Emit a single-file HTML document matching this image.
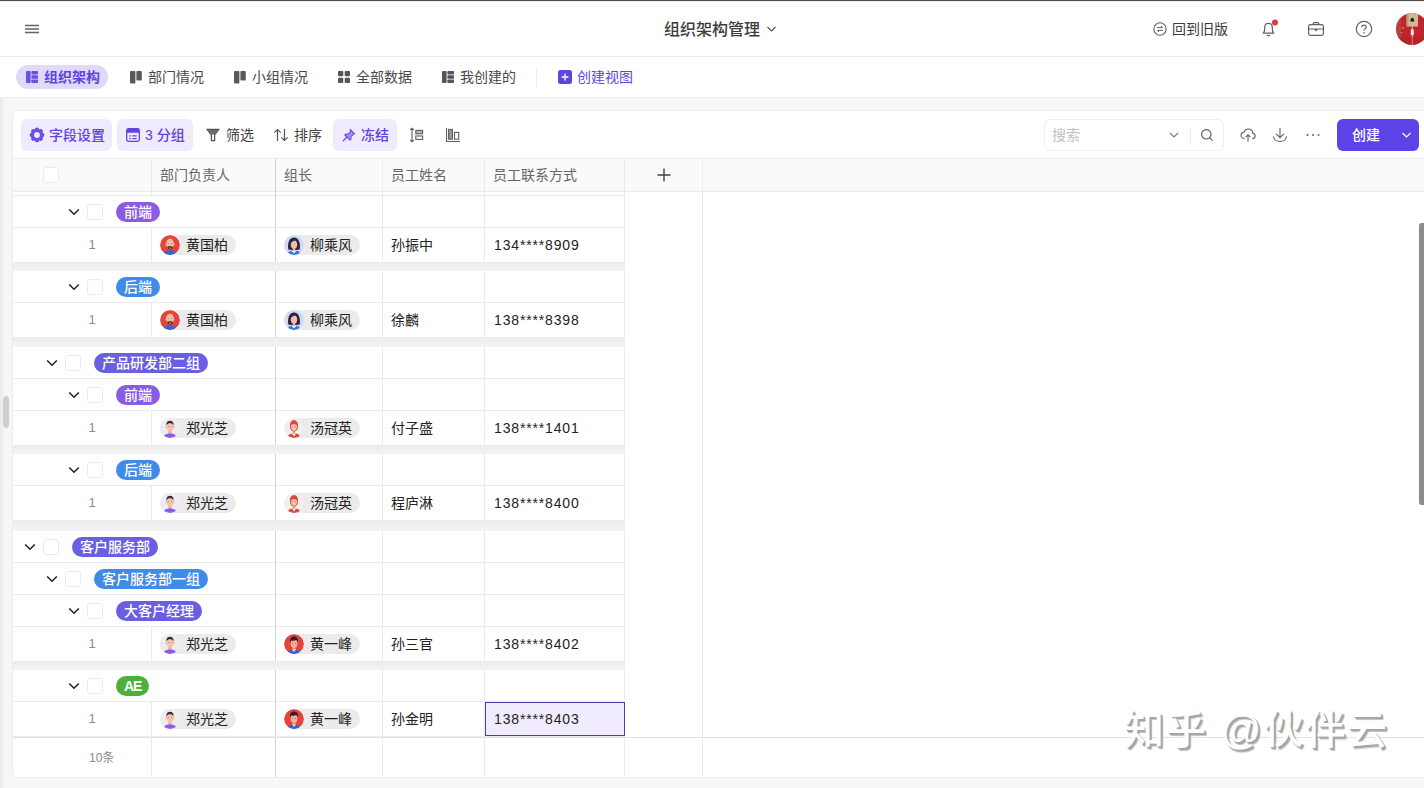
<!DOCTYPE html>
<html lang="zh-CN"><head><meta charset="utf-8"><title>组织架构管理</title>
<style>
*{box-sizing:border-box;margin:0;padding:0}
html,body{width:1424px;height:788px;overflow:hidden}
body{position:relative;background:#f6f7f9;font-family:"Liberation Sans","Noto Sans CJK SC",sans-serif;font-size:14px;color:#333;line-height:20px}
.abs{position:absolute}
.t{position:absolute;white-space:nowrap;line-height:20px;height:20px}
svg{position:absolute;overflow:visible}
#topline{left:0;top:0;width:1424px;height:1px;background:#505050;box-shadow:0 1px 0 rgba(0,0,0,.06)}
#header{left:0;top:0;width:1424px;height:57px;background:#fff;border-bottom:1px solid #ececec}
#tabs{left:0;top:57px;width:1424px;height:41px;background:#fff;border-bottom:1px solid #eeeff1}
#leftshade{left:0;top:98px;width:12px;height:690px;background:linear-gradient(90deg,#e7e8ea 0,#f1f2f4 3px,#f5f6f8 7px)}
#card{left:12px;top:110px;width:1420px;height:668px;background:#fff;border:1px solid #ececec;border-radius:6px}
.pill{position:absolute;border-radius:12px;background:#e0d9fa}
.btn{position:absolute;border-radius:6px;background:#efebfd;height:32px;top:119px}
.pu{color:#5f45de}
.hl{position:absolute;height:1px;background:#ebebeb}
.vl{position:absolute;width:1px;background:#ebebeb}
.gap{position:absolute;left:13px;width:612px;background:linear-gradient(180deg,#ededed,#f3f3f3)}
.cb{position:absolute;width:16px;height:16px;border:1px solid #ebebeb;border-radius:3px;background:#fff}
.tag{position:absolute;height:20px;border-radius:10px;color:#fff;font-weight:500;padding:0 8px;line-height:20px;white-space:nowrap}
.chip{position:absolute;height:20px;border-radius:10px;background:#ebebeb;line-height:20px;padding-left:26px;color:#222;white-space:nowrap}
.num{position:absolute;font-size:13px;color:#8c8c8c;width:20px;text-align:center;left:82px;line-height:20px}
.cell{position:absolute;color:#222;white-space:nowrap;line-height:20px}
</style></head>
<body>
<div id="header" class="abs"></div><div id="topline" class="abs"></div>
<svg style="left:24px;top:24px" width="16" height="10" viewBox="0 0 16 10"><path d="M1 1.5h14M1 5h14M1 8.5h14" stroke="#666" stroke-width="1.3" fill="none"/></svg>
<div class="t" style="left:664px;top:19px;font-size:16px;font-weight:500;color:#3c3c3c;line-height:22px;height:22px">组织架构管理</div>
<svg style="left:766px;top:25px" width="11" height="8" viewBox="0 0 11 8"><path d="M1.5 2l4 4 4-4" stroke="#555" stroke-width="1.2" fill="none"/></svg>
<svg style="left:1152px;top:21px" width="16" height="16" viewBox="0 0 16 16"><circle cx="8" cy="8" r="6.200" stroke="#636363" stroke-width="1.1" fill="none"/><path d="M5 6.6h5.5M9 5l1.6 1.6M11 9.4H5.5M7 11L5.4 9.4" stroke="#636363" stroke-width="1" fill="none"/></svg>
<div class="t" style="left:1172px;top:19px;color:#3c3c3c">回到旧版</div>
<svg style="left:1259px;top:19px" width="20" height="20" viewBox="0 0 20 20"><path d="M4.2 14.2h10.6c-1-1-1.5-2.2-1.5-4.2V8.3c0-2.2-1.6-3.9-3.8-3.9S5.700 6.1 5.700 8.300V10c0 2-.5 3.200-1.500 4.200z" stroke="#636363" stroke-width="1.2" fill="none" stroke-linejoin="round"/><path d="M7.900 15.800c.3.700.900 1.100 1.600 1.100s1.300-.4 1.600-1.100" stroke="#636363" stroke-width="1.200" fill="none"/><circle cx="16" cy="3.500" r="3" fill="#e8353e"/></svg>
<svg style="left:1307px;top:20px" width="18" height="18" viewBox="0 0 18 18"><rect x="1.600" y="4.600" width="14.800" height="10.800" rx="1.800" stroke="#636363" stroke-width="1.200" fill="none"/><path d="M6.200 4.600V3.600c0-.6.400-1 1-1h3.600c.6 0 1 .4 1 1v1M1.600 9h14.800M7.600 9.200l1.400 1.400 1.400-1.400" stroke="#636363" stroke-width="1.200" fill="none"/></svg>
<svg style="left:1355px;top:20px" width="18" height="18" viewBox="0 0 18 18"><circle cx="9" cy="9" r="7.700" stroke="#636363" stroke-width="1.200" fill="none"/><path d="M6.800 7.300c0-1.300 1-2.100 2.200-2.100s2.200.8 2.200 2c0 1.700-2.200 1.700-2.200 3.500" stroke="#636363" stroke-width="1.200" fill="none"/><circle cx="9" cy="12.800" r=".8" fill="#636363"/></svg>
<svg style="left:1396px;top:13px" width="32" height="32" viewBox="0 0 32 32"><defs><clipPath id="uc"><circle cx="16" cy="16" r="16"/></clipPath><filter id="ub" x="-10%" y="-10%" width="120%" height="120%"><feGaussianBlur stdDeviation=".45"/></filter></defs><g clip-path="url(#uc)"><rect width="32" height="32" fill="#c2242d"/><g filter="url(#ub)"><rect x="-1" y="-1" width="6" height="34" fill="#a35a55" opacity=".55"/><rect x="10.500" y="-1" width="11.500" height="14.500" fill="#cfb992"/><rect x="10.500" y="-1" width="2" height="14.500" fill="#b98f6e" opacity=".7"/><path d="M16.300 4.800c-1.300 0-1.900 1.900-1.900 3.800h3.800c0-1.900-.6-3.800-1.900-3.800z" fill="#1d1a18"/><rect x="15.700" y="13" width="1.300" height="20" fill="#e3a99b"/><rect x="14.800" y="16.500" width="3" height="5.500" fill="#f3e4e6"/><rect x="6" y="14" width="1.500" height="1.500" fill="#e9b4b0" opacity=".8"/><rect x="5" y="19" width="1.200" height="1.200" fill="#e9b4b0" opacity=".7"/><rect x="26.500" y="-1" width="6" height="34" fill="#9c3038" opacity=".7"/><rect x="0" y="24" width="32" height="9" fill="#a81e28" opacity=".45"/></g></g></svg>
<div id="tabs" class="abs"></div>
<div class="pill" style="left:16px;top:65px;width:92px;height:24px"></div>
<svg style="left:26px;top:71px" width="12" height="12" viewBox="0 0 12 12"><rect x="0" y="0" width="4.600" height="12" rx="1" fill="#6a50e6"/><rect x="5.400" y="0" width="6.600" height="3.500" rx=".8" fill="#6a50e6"/><rect x="5.400" y="4.250" width="6.600" height="3.500" rx=".6" fill="#6a50e6"/><rect x="5.400" y="8.500" width="6.600" height="3.500" rx=".8" fill="#6a50e6"/></svg>
<div class="t pu" style="left:44px;top:67px;font-weight:700">组织架构</div>
<svg style="left:130px;top:71px" width="12" height="12" viewBox="0 0 12 12"><rect x="0" y="0" width="5.400" height="12.400" rx="1" fill="#5a5a5a"/><rect x="6.400" y="0" width="5.400" height="9.400" rx="1" fill="#5a5a5a"/></svg>
<div class="t" style="left:148px;top:67px;color:#494949">部门情况</div>
<svg style="left:234px;top:71px" width="12" height="12" viewBox="0 0 12 12"><rect x="0" y="0" width="5.400" height="12.400" rx="1" fill="#5a5a5a"/><rect x="6.400" y="0" width="5.400" height="9.400" rx="1" fill="#5a5a5a"/></svg>
<div class="t" style="left:252px;top:67px;color:#494949">小组情况</div>
<svg style="left:338px;top:71px" width="12" height="12" viewBox="0 0 12 12"><rect x="0" y="0" width="5.300" height="5.300" rx="1" fill="#555"/><rect x="6.700" y="0" width="5.300" height="5.300" rx="1" fill="#555"/><rect x="0" y="6.700" width="5.300" height="5.300" rx="1" fill="#555"/><rect x="6.700" y="6.700" width="5.300" height="5.300" rx="1" fill="#555"/></svg>
<div class="t" style="left:356px;top:67px;color:#494949">全部数据</div>
<svg style="left:442px;top:71px" width="12" height="12" viewBox="0 0 12 12"><rect x="0" y="0" width="4.600" height="12" rx="1" fill="#555"/><rect x="5.400" y="0" width="6.600" height="3.500" rx=".8" fill="#555"/><rect x="5.400" y="4.250" width="6.600" height="3.500" rx=".6" fill="#555"/><rect x="5.400" y="8.500" width="6.600" height="3.500" rx=".8" fill="#555"/></svg>
<div class="t" style="left:460px;top:67px;color:#494949">我创建的</div>
<div class="vl" style="left:536px;top:67px;height:20px;background:#ececec"></div>
<svg style="left:558px;top:70px" width="14" height="14" viewBox="0 0 14 14"><rect width="14" height="14" rx="2.500" fill="#5f45de"/><path d="M7 3.600v6.800M3.600 7h6.800" stroke="#fff" stroke-width="1.300"/></svg>
<div class="t pu" style="left:577px;top:67px">创建视图</div>
<div id="leftshade" class="abs"></div>
<div class="abs" style="left:3px;top:396px;width:6px;height:32px;border-radius:3px;background:#cfcfcf"></div>
<div id="card" class="abs"></div>
<div class="btn" style="left:21px;width:91px"></div>
<svg style="left:29px;top:127px" width="16" height="16" viewBox="0 0 16 16"><g fill="#6a50e6"><circle cx="13.10" cy="8.00" r="2.3"/><circle cx="11.61" cy="11.61" r="2.3"/><circle cx="8.00" cy="13.10" r="2.3"/><circle cx="4.39" cy="11.61" r="2.3"/><circle cx="2.90" cy="8.00" r="2.3"/><circle cx="4.39" cy="4.39" r="2.3"/><circle cx="8.00" cy="2.90" r="2.3"/><circle cx="11.61" cy="4.39" r="2.3"/><circle cx="8" cy="8" r="5.600"/></g><circle cx="8" cy="8" r="2.900" fill="#efebfd"/></svg>
<div class="t pu" style="left:49px;top:125px;font-weight:500">字段设置</div>
<div class="btn" style="left:117px;width:76px"></div>
<svg style="left:126px;top:128px" width="14" height="14" viewBox="0 0 14 14"><rect x=".700" y=".700" width="12.600" height="12.600" rx="1.800" stroke="#5f45de" stroke-width="1.300" fill="none"/><path d="M.7 2.500c0-1 .8-1.800 1.800-1.800h9c1 0 1.800.8 1.800 1.800v2.300H.7z" fill="#5f45de"/><path d="M3.300 7.800h1.600M6.300 7.800h4.400M3.300 10.600h1.600M6.300 10.600h4.400" stroke="#5f45de" stroke-width="1.200"/></svg>
<div class="t pu" style="left:145px;top:125px;font-weight:500">3 分组</div>
<svg style="left:206px;top:128px" width="14" height="14" viewBox="0 0 14 14"><path d="M1 1.300h12L8.600 6.800v5.800H5.400V6.800z" stroke="#555" stroke-width="1.300" fill="none" stroke-linejoin="round"/><path d="M1.800 2h10.400L8.400 6.600H5.600z" fill="#6a6a6a"/></svg>
<div class="t" style="left:226px;top:125px;color:#444">筛选</div>
<svg style="left:273px;top:128px" width="16" height="14" viewBox="0 0 16 14"><path d="M4.500 13V1.500M1.300 4.700L4.500 1.500l3.200 3.200M11.500 1v11.500M8.300 9.300l3.200 3.200 3.200-3.200" stroke="#555" stroke-width="1.200" fill="none"/></svg>
<div class="t" style="left:294px;top:125px;color:#444">排序</div>
<div class="btn" style="left:333px;width:64px"></div>
<svg style="left:342px;top:128px" width="14" height="14" viewBox="0 0 14 14"><path d="M8.200 1.400l4.400 4.400-1.300.5-2.300 2.300-.1 2.700-.9.900-5.200-5.200.9-.9 2.700-.1 2.300-2.300z" fill="#a58cf6" stroke="#6a4fe2" stroke-width="1.100" stroke-linejoin="round"/><path d="M5 9L1.300 12.700" stroke="#6a4fe2" stroke-width="1.300" stroke-linecap="round"/></svg>
<div class="t pu" style="left:361px;top:125px;font-weight:500">冻结</div>
<svg style="left:408px;top:127px" width="16" height="16" viewBox="0 0 16 16"><path d="M4 1.200v13.600M2.200 3L4 1.200 5.800 3M2.200 13L4 14.800 5.800 13" stroke="#5e5e5e" stroke-width="1.100" fill="none"/><rect x="7.800" y="3.400" width="6.800" height="3.400" stroke="#5e5e5e" stroke-width="1.100" fill="#b5b5b5"/><rect x="7.800" y="9" width="6.800" height="3.400" stroke="#5e5e5e" stroke-width="1.100" fill="none"/></svg>
<svg style="left:445px;top:127px" width="16" height="16" viewBox="0 0 16 16"><path d="M1.500 1v13.500H15" stroke="#5e5e5e" stroke-width="1.100" fill="none"/><rect x="3.600" y="2.400" width="3.800" height="9.800" stroke="#5e5e5e" stroke-width="1.100" fill="#9a9a9a"/><rect x="9.500" y="5.400" width="4.200" height="6.800" stroke="#5e5e5e" stroke-width="1.100" fill="none"/></svg>
<div class="abs" style="left:1044px;top:119px;width:180px;height:32px;border:1px solid #efefef;border-radius:6px;background:#fff"></div>
<div class="t" style="left:1052px;top:125px;color:#bfbfbf">搜索</div>
<svg style="left:1169px;top:131px" width="10" height="8" viewBox="0 0 10 8"><path d="M1 2l4 4 4-4" stroke="#777" stroke-width="1.100" fill="none"/></svg>
<div class="vl" style="left:1190px;top:127px;height:16px;background:#ececec"></div>
<svg style="left:1200px;top:128px" width="14" height="14" viewBox="0 0 14 14"><circle cx="6.300" cy="6.300" r="4.700" stroke="#555" stroke-width="1.100" fill="none"/><path d="M9.800 9.800l2.800 2.800" stroke="#555" stroke-width="1.100"/></svg>
<svg style="left:1240px;top:127px" width="16" height="16" viewBox="0 0 16 16"><path d="M4.600 11.600C2.600 11.600 1 10.200 1 8.300c0-1.700 1.300-3 3-3.200C4.600 3.300 6.200 2 8.200 2c2.500 0 4.400 1.800 4.500 4.100 1.400.3 2.400 1.400 2.400 2.800 0 1.500-1.200 2.700-2.800 2.700" stroke="#636363" stroke-width="1.100" fill="none"/><path d="M8 14.800V8M5.600 10.200L8 7.800l2.400 2.400" stroke="#636363" stroke-width="1.100" fill="none"/></svg>
<svg style="left:1272px;top:127px" width="16" height="16" viewBox="0 0 16 16"><path d="M8 1v9.500M4.200 6.800L8 10.600l3.800-3.800" stroke="#636363" stroke-width="1.100" fill="none"/><path d="M1.500 9.500c.5 3 3.200 5 6.500 5s6-2 6.500-5" stroke="#636363" stroke-width="1.100" fill="none"/></svg>
<svg style="left:1306px;top:133px" width="14" height="4" viewBox="0 0 14 4"><circle cx="1.500" cy="2" r="1" fill="#636363"/><circle cx="7" cy="2" r="1" fill="#636363"/><circle cx="12.500" cy="2" r="1" fill="#636363"/></svg>
<div class="abs" style="left:1337px;top:119px;width:82px;height:32px;border-radius:6px;background:#5d42e8"></div>
<div class="t" style="left:1352px;top:125px;color:#fff;font-weight:500">创建</div>
<svg style="left:1401px;top:131px" width="11" height="8" viewBox="0 0 11 8"><path d="M1.500 2l4 4 4-4" stroke="#fff" stroke-width="1.200" fill="none"/></svg>
<div class="abs" style="left:13px;top:159px;width:1411px;height:32px;background:#fafafa"></div>
<div class="hl" style="left:13px;top:158px;width:1411px"></div>
<div class="hl" style="left:13px;top:191px;width:1411px"></div>
<div class="cb" style="left:43px;top:167px"></div>
<div class="t" style="left:160px;top:165px;color:#666">部门负责人</div>
<div class="t" style="left:284px;top:165px;color:#666">组长</div>
<div class="t" style="left:391px;top:165px;color:#666">员工姓名</div>
<div class="t" style="left:493px;top:165px;color:#666">员工联系方式</div>
<svg style="left:657px;top:168px" width="14" height="14" viewBox="0 0 14 14"><path d="M7 .5v13M.5 7h13" stroke="#444" stroke-width="1.400"/></svg>
<div class="vl" style="left:624px;top:159px;height:618px"></div>
<div class="vl" style="left:702px;top:159px;height:618px"></div>
<div class="hl" style="left:13px;top:195px;width:612px"></div>
<div class="hl" style="left:13px;top:227px;width:612px"></div>
<svg style="left:68px;top:208px" width="12" height="8" viewBox="0 0 12 8"><path d="M1.200 1.500L6 6.300l4.800-4.800" stroke="#222" stroke-width="1.500" fill="none"/></svg>
<div class="cb" style="left:87px;top:204px"></div>
<div class="tag" style="left:116px;top:202px;background:#8a5ce6">前端</div>
<div class="vl" style="left:275px;top:196px;height:31px;background:#d2d2d2"></div>
<div class="vl" style="left:382px;top:196px;height:31px;background:#ebebeb"></div>
<div class="vl" style="left:484px;top:196px;height:31px;background:#ebebeb"></div>
<div class="hl" style="left:13px;top:262px;width:612px"></div>
<div class="num" style="top:235px">1</div>
<div class="vl" style="left:151px;top:228px;height:34px;background:#ebebeb"></div>
<div class="vl" style="left:275px;top:228px;height:34px;background:#d2d2d2"></div>
<div class="vl" style="left:382px;top:228px;height:34px;background:#ebebeb"></div>
<div class="vl" style="left:484px;top:228px;height:34px;background:#ebebeb"></div>
<div class="chip" style="left:160px;top:235px;width:76px">黄国柏</div>
<svg style="left:160px;top:235px" width="20" height="20" viewBox="0 0 20 20"><defs><clipPath id="c160_235"><circle cx="10" cy="10" r="10"/></clipPath></defs><g clip-path="url(#c160_235)"><circle cx="10" cy="10" r="10" fill="#e6433b"/><path d="M3.500 20c0-3.200 2.600-4.800 6.500-4.800s6.500 1.600 6.500 4.800z" fill="#3566cf"/><ellipse cx="10" cy="8.800" rx="3.900" ry="5.400" fill="#f3b69b"/><ellipse cx="6.100" cy="9.400" rx=".8" ry="1.200" fill="#eea688"/><ellipse cx="13.900" cy="9.400" rx=".8" ry="1.200" fill="#eea688"/><rect x="6.700" y="7.600" width="2.800" height="2" rx=".8" fill="#fbe9e2"/><rect x="10.500" y="7.600" width="2.800" height="2" rx=".8" fill="#fbe9e2"/><circle cx="8.100" cy="8.600" r=".55" fill="#3a2a2a"/><circle cx="11.900" cy="8.600" r=".55" fill="#3a2a2a"/><path d="M7.200 11.800c.8-.9 4.800-.9 5.600 0 .2 1.400-.9 2.600-2.800 2.600s-3-1.200-2.800-2.600z" fill="#4a2418"/><ellipse cx="10" cy="12.900" rx="1.100" ry=".5" fill="#f6d9cf"/></g></svg>
<div class="chip" style="left:284px;top:235px;width:76px">柳乘风</div>
<svg style="left:284px;top:235px" width="20" height="20" viewBox="0 0 20 20"><defs><clipPath id="c284_235"><circle cx="10" cy="10" r="10"/></clipPath></defs><g clip-path="url(#c284_235)"><circle cx="10" cy="10" r="10" fill="#cfdaf6"/><path d="M4.300 14.600C3.200 8 5.400 2.400 10 2.400s6.800 5.600 5.700 12.200c-1.500.6-9.900.6-11.400 0z" fill="#2b2342"/><path d="M3.500 20c0-3 2.600-4.400 6.500-4.400s6.500 1.400 6.500 4.400z" fill="#3b78dc"/><path d="M7.400 15.800L10 18.200l2.600-2.400c-1.400-.5-3.800-.5-5.200 0z" fill="#fff"/><rect x="8.800" y="12.600" width="2.400" height="3.400" rx="1" fill="#f0ab95"/><ellipse cx="10" cy="9.600" rx="3.200" ry="4.200" fill="#f6bda8"/><path d="M6.600 9c.4-2.600 3.400-3 5-4.600.9 1 1.800 2.600 1.800 4.600.5-3.600-1-5.800-3.400-5.800S6.100 5.400 6.600 9z" fill="#2b2342"/></g></svg>
<div class="cell" style="left:391px;top:235px">孙振中</div>
<div class="cell" style="left:494px;top:235px;letter-spacing:.85px">134****8909</div>
<div class="gap" style="top:263px;height:8px"></div>
<div class="hl" style="left:13px;top:302px;width:612px"></div>
<svg style="left:68px;top:283px" width="12" height="8" viewBox="0 0 12 8"><path d="M1.200 1.500L6 6.300l4.800-4.800" stroke="#222" stroke-width="1.500" fill="none"/></svg>
<div class="cb" style="left:87px;top:279px"></div>
<div class="tag" style="left:116px;top:277px;background:#3f8ce8">后端</div>
<div class="vl" style="left:275px;top:271px;height:31px;background:#d2d2d2"></div>
<div class="vl" style="left:382px;top:271px;height:31px;background:#ebebeb"></div>
<div class="vl" style="left:484px;top:271px;height:31px;background:#ebebeb"></div>
<div class="hl" style="left:13px;top:337px;width:612px"></div>
<div class="num" style="top:310px">1</div>
<div class="vl" style="left:151px;top:303px;height:34px;background:#ebebeb"></div>
<div class="vl" style="left:275px;top:303px;height:34px;background:#d2d2d2"></div>
<div class="vl" style="left:382px;top:303px;height:34px;background:#ebebeb"></div>
<div class="vl" style="left:484px;top:303px;height:34px;background:#ebebeb"></div>
<div class="chip" style="left:160px;top:310px;width:76px">黄国柏</div>
<svg style="left:160px;top:310px" width="20" height="20" viewBox="0 0 20 20"><defs><clipPath id="c160_310"><circle cx="10" cy="10" r="10"/></clipPath></defs><g clip-path="url(#c160_310)"><circle cx="10" cy="10" r="10" fill="#e6433b"/><path d="M3.500 20c0-3.200 2.600-4.800 6.500-4.800s6.500 1.600 6.500 4.800z" fill="#3566cf"/><ellipse cx="10" cy="8.800" rx="3.900" ry="5.400" fill="#f3b69b"/><ellipse cx="6.100" cy="9.400" rx=".8" ry="1.200" fill="#eea688"/><ellipse cx="13.900" cy="9.400" rx=".8" ry="1.200" fill="#eea688"/><rect x="6.700" y="7.600" width="2.800" height="2" rx=".8" fill="#fbe9e2"/><rect x="10.500" y="7.600" width="2.800" height="2" rx=".8" fill="#fbe9e2"/><circle cx="8.100" cy="8.600" r=".55" fill="#3a2a2a"/><circle cx="11.900" cy="8.600" r=".55" fill="#3a2a2a"/><path d="M7.200 11.800c.8-.9 4.800-.9 5.600 0 .2 1.400-.9 2.600-2.800 2.600s-3-1.200-2.800-2.600z" fill="#4a2418"/><ellipse cx="10" cy="12.900" rx="1.100" ry=".5" fill="#f6d9cf"/></g></svg>
<div class="chip" style="left:284px;top:310px;width:76px">柳乘风</div>
<svg style="left:284px;top:310px" width="20" height="20" viewBox="0 0 20 20"><defs><clipPath id="c284_310"><circle cx="10" cy="10" r="10"/></clipPath></defs><g clip-path="url(#c284_310)"><circle cx="10" cy="10" r="10" fill="#cfdaf6"/><path d="M4.300 14.600C3.200 8 5.400 2.400 10 2.400s6.800 5.600 5.700 12.200c-1.500.6-9.900.6-11.400 0z" fill="#2b2342"/><path d="M3.500 20c0-3 2.600-4.400 6.500-4.400s6.500 1.400 6.500 4.400z" fill="#3b78dc"/><path d="M7.400 15.800L10 18.200l2.600-2.400c-1.400-.5-3.800-.5-5.200 0z" fill="#fff"/><rect x="8.800" y="12.600" width="2.400" height="3.400" rx="1" fill="#f0ab95"/><ellipse cx="10" cy="9.600" rx="3.200" ry="4.200" fill="#f6bda8"/><path d="M6.600 9c.4-2.600 3.400-3 5-4.600.9 1 1.800 2.600 1.800 4.600.5-3.600-1-5.800-3.400-5.800S6.100 5.400 6.600 9z" fill="#2b2342"/></g></svg>
<div class="cell" style="left:391px;top:310px">徐麟</div>
<div class="cell" style="left:494px;top:310px;letter-spacing:.85px">138****8398</div>
<div class="gap" style="top:338px;height:9px"></div>
<div class="hl" style="left:13px;top:378px;width:612px"></div>
<svg style="left:46px;top:359px" width="12" height="8" viewBox="0 0 12 8"><path d="M1.200 1.500L6 6.300l4.800-4.800" stroke="#222" stroke-width="1.500" fill="none"/></svg>
<div class="cb" style="left:65px;top:355px"></div>
<div class="tag" style="left:94px;top:353px;background:#6a5fe2">产品研发部二组</div>
<div class="vl" style="left:275px;top:347px;height:31px;background:#d2d2d2"></div>
<div class="vl" style="left:382px;top:347px;height:31px;background:#ebebeb"></div>
<div class="vl" style="left:484px;top:347px;height:31px;background:#ebebeb"></div>
<div class="hl" style="left:13px;top:410px;width:612px"></div>
<svg style="left:68px;top:391px" width="12" height="8" viewBox="0 0 12 8"><path d="M1.200 1.500L6 6.300l4.800-4.800" stroke="#222" stroke-width="1.500" fill="none"/></svg>
<div class="cb" style="left:87px;top:387px"></div>
<div class="tag" style="left:116px;top:385px;background:#8a5ce6">前端</div>
<div class="vl" style="left:275px;top:379px;height:31px;background:#d2d2d2"></div>
<div class="vl" style="left:382px;top:379px;height:31px;background:#ebebeb"></div>
<div class="vl" style="left:484px;top:379px;height:31px;background:#ebebeb"></div>
<div class="hl" style="left:13px;top:445px;width:612px"></div>
<div class="num" style="top:418px">1</div>
<div class="vl" style="left:151px;top:411px;height:34px;background:#ebebeb"></div>
<div class="vl" style="left:275px;top:411px;height:34px;background:#d2d2d2"></div>
<div class="vl" style="left:382px;top:411px;height:34px;background:#ebebeb"></div>
<div class="vl" style="left:484px;top:411px;height:34px;background:#ebebeb"></div>
<div class="chip" style="left:160px;top:418px;width:76px">郑光芝</div>
<svg style="left:160px;top:418px" width="20" height="20" viewBox="0 0 20 20"><defs><clipPath id="c160_418"><circle cx="10" cy="10" r="10"/></clipPath></defs><g clip-path="url(#c160_418)"><circle cx="10" cy="10" r="10" fill="#ededf1"/><path d="M3.500 20c0-3.200 2.600-4.600 6.500-4.600s6.500 1.400 6.500 4.600z" fill="#8b5ff0"/><path d="M8.400 15.300L10 17.600l1.600-2.300z" fill="#6f45d8"/><rect x="8.500" y="12" width="3" height="3.800" rx="1" fill="#eaa994"/><ellipse cx="6.300" cy="9" rx=".8" ry="1.200" fill="#eeb19c"/><ellipse cx="13.700" cy="9" rx=".8" ry="1.200" fill="#eeb19c"/><ellipse cx="10" cy="8.600" rx="3.500" ry="4.900" fill="#f5c4b1"/><path d="M6.400 7.600C6 4.400 7.600 2.800 10 2.800s4 1.600 3.600 4.800C12.800 5.800 11.600 5.200 10 5.200S7.200 5.800 6.400 7.600z" fill="#3b2b30"/><circle cx="8.500" cy="8.600" r=".45" fill="#4a3a3a"/><circle cx="11.500" cy="8.600" r=".45" fill="#4a3a3a"/></g></svg>
<div class="chip" style="left:284px;top:418px;width:76px">汤冠英</div>
<svg style="left:284px;top:418px" width="20" height="20" viewBox="0 0 20 20"><defs><clipPath id="c284_418"><circle cx="10" cy="10" r="10"/></clipPath></defs><g clip-path="url(#c284_418)"><circle cx="10" cy="10" r="10" fill="#f1eeee"/><path d="M3.500 20c0-3.200 2.600-4.600 6.500-4.600s6.500 1.400 6.500 4.600z" fill="#e2463e"/><path d="M8 15.400L10 18.400l2-3z" fill="#fff"/><rect x="8.500" y="12" width="3" height="3.800" rx="1" fill="#eaa994"/><path d="M6 9.500C5.400 4.800 7.200 2 10 2s4.600 2.800 4 7.500c-.2 2-1.800 3.900-4 3.900s-3.800-1.900-4-3.900z" fill="#e2463e"/><path d="M6.900 8.200c0-1.600 1.400-2 3.100-2s3.100.4 3.100 2c0 2.600-1.200 4.600-3.100 4.600S6.900 10.800 6.900 8.200z" fill="#f5c4b1"/><circle cx="8.600" cy="8.800" r=".45" fill="#4a3a3a"/><circle cx="11.400" cy="8.800" r=".45" fill="#4a3a3a"/></g></svg>
<div class="cell" style="left:391px;top:418px">付子盛</div>
<div class="cell" style="left:494px;top:418px;letter-spacing:.85px">138****1401</div>
<div class="gap" style="top:446px;height:8px"></div>
<div class="hl" style="left:13px;top:485px;width:612px"></div>
<svg style="left:68px;top:466px" width="12" height="8" viewBox="0 0 12 8"><path d="M1.200 1.500L6 6.300l4.800-4.800" stroke="#222" stroke-width="1.500" fill="none"/></svg>
<div class="cb" style="left:87px;top:462px"></div>
<div class="tag" style="left:116px;top:460px;background:#3f8ce8">后端</div>
<div class="vl" style="left:275px;top:454px;height:31px;background:#d2d2d2"></div>
<div class="vl" style="left:382px;top:454px;height:31px;background:#ebebeb"></div>
<div class="vl" style="left:484px;top:454px;height:31px;background:#ebebeb"></div>
<div class="hl" style="left:13px;top:520px;width:612px"></div>
<div class="num" style="top:493px">1</div>
<div class="vl" style="left:151px;top:486px;height:34px;background:#ebebeb"></div>
<div class="vl" style="left:275px;top:486px;height:34px;background:#d2d2d2"></div>
<div class="vl" style="left:382px;top:486px;height:34px;background:#ebebeb"></div>
<div class="vl" style="left:484px;top:486px;height:34px;background:#ebebeb"></div>
<div class="chip" style="left:160px;top:493px;width:76px">郑光芝</div>
<svg style="left:160px;top:493px" width="20" height="20" viewBox="0 0 20 20"><defs><clipPath id="c160_493"><circle cx="10" cy="10" r="10"/></clipPath></defs><g clip-path="url(#c160_493)"><circle cx="10" cy="10" r="10" fill="#ededf1"/><path d="M3.500 20c0-3.200 2.600-4.600 6.500-4.600s6.500 1.400 6.500 4.600z" fill="#8b5ff0"/><path d="M8.400 15.300L10 17.600l1.600-2.300z" fill="#6f45d8"/><rect x="8.500" y="12" width="3" height="3.800" rx="1" fill="#eaa994"/><ellipse cx="6.300" cy="9" rx=".8" ry="1.200" fill="#eeb19c"/><ellipse cx="13.700" cy="9" rx=".8" ry="1.200" fill="#eeb19c"/><ellipse cx="10" cy="8.600" rx="3.500" ry="4.900" fill="#f5c4b1"/><path d="M6.400 7.600C6 4.400 7.600 2.800 10 2.800s4 1.600 3.600 4.800C12.800 5.800 11.600 5.200 10 5.200S7.200 5.800 6.400 7.600z" fill="#3b2b30"/><circle cx="8.500" cy="8.600" r=".45" fill="#4a3a3a"/><circle cx="11.500" cy="8.600" r=".45" fill="#4a3a3a"/></g></svg>
<div class="chip" style="left:284px;top:493px;width:76px">汤冠英</div>
<svg style="left:284px;top:493px" width="20" height="20" viewBox="0 0 20 20"><defs><clipPath id="c284_493"><circle cx="10" cy="10" r="10"/></clipPath></defs><g clip-path="url(#c284_493)"><circle cx="10" cy="10" r="10" fill="#f1eeee"/><path d="M3.500 20c0-3.200 2.600-4.600 6.500-4.600s6.500 1.400 6.500 4.600z" fill="#e2463e"/><path d="M8 15.400L10 18.400l2-3z" fill="#fff"/><rect x="8.500" y="12" width="3" height="3.800" rx="1" fill="#eaa994"/><path d="M6 9.500C5.400 4.800 7.200 2 10 2s4.600 2.800 4 7.500c-.2 2-1.800 3.900-4 3.900s-3.800-1.900-4-3.900z" fill="#e2463e"/><path d="M6.900 8.200c0-1.600 1.400-2 3.100-2s3.100.4 3.100 2c0 2.600-1.200 4.600-3.100 4.600S6.900 10.800 6.900 8.200z" fill="#f5c4b1"/><circle cx="8.600" cy="8.800" r=".45" fill="#4a3a3a"/><circle cx="11.400" cy="8.800" r=".45" fill="#4a3a3a"/></g></svg>
<div class="cell" style="left:391px;top:493px">程庐淋</div>
<div class="cell" style="left:494px;top:493px;letter-spacing:.85px">138****8400</div>
<div class="gap" style="top:521px;height:10px"></div>
<div class="hl" style="left:13px;top:562px;width:612px"></div>
<svg style="left:24px;top:543px" width="12" height="8" viewBox="0 0 12 8"><path d="M1.200 1.500L6 6.300l4.800-4.800" stroke="#222" stroke-width="1.500" fill="none"/></svg>
<div class="cb" style="left:43px;top:539px"></div>
<div class="tag" style="left:72px;top:537px;background:#6a5fe2">客户服务部</div>
<div class="vl" style="left:275px;top:531px;height:31px;background:#d2d2d2"></div>
<div class="vl" style="left:382px;top:531px;height:31px;background:#ebebeb"></div>
<div class="vl" style="left:484px;top:531px;height:31px;background:#ebebeb"></div>
<div class="hl" style="left:13px;top:594px;width:612px"></div>
<svg style="left:46px;top:575px" width="12" height="8" viewBox="0 0 12 8"><path d="M1.200 1.500L6 6.300l4.800-4.800" stroke="#222" stroke-width="1.500" fill="none"/></svg>
<div class="cb" style="left:65px;top:571px"></div>
<div class="tag" style="left:94px;top:569px;background:#3f8ce8">客户服务部一组</div>
<div class="vl" style="left:275px;top:563px;height:31px;background:#d2d2d2"></div>
<div class="vl" style="left:382px;top:563px;height:31px;background:#ebebeb"></div>
<div class="vl" style="left:484px;top:563px;height:31px;background:#ebebeb"></div>
<div class="hl" style="left:13px;top:626px;width:612px"></div>
<svg style="left:68px;top:607px" width="12" height="8" viewBox="0 0 12 8"><path d="M1.200 1.500L6 6.300l4.800-4.800" stroke="#222" stroke-width="1.500" fill="none"/></svg>
<div class="cb" style="left:87px;top:603px"></div>
<div class="tag" style="left:116px;top:601px;background:#6a5fe2">大客户经理</div>
<div class="vl" style="left:275px;top:595px;height:31px;background:#d2d2d2"></div>
<div class="vl" style="left:382px;top:595px;height:31px;background:#ebebeb"></div>
<div class="vl" style="left:484px;top:595px;height:31px;background:#ebebeb"></div>
<div class="hl" style="left:13px;top:661px;width:612px"></div>
<div class="num" style="top:634px">1</div>
<div class="vl" style="left:151px;top:627px;height:34px;background:#ebebeb"></div>
<div class="vl" style="left:275px;top:627px;height:34px;background:#d2d2d2"></div>
<div class="vl" style="left:382px;top:627px;height:34px;background:#ebebeb"></div>
<div class="vl" style="left:484px;top:627px;height:34px;background:#ebebeb"></div>
<div class="chip" style="left:160px;top:634px;width:76px">郑光芝</div>
<svg style="left:160px;top:634px" width="20" height="20" viewBox="0 0 20 20"><defs><clipPath id="c160_634"><circle cx="10" cy="10" r="10"/></clipPath></defs><g clip-path="url(#c160_634)"><circle cx="10" cy="10" r="10" fill="#ededf1"/><path d="M3.500 20c0-3.200 2.600-4.600 6.500-4.600s6.500 1.400 6.500 4.600z" fill="#8b5ff0"/><path d="M8.400 15.300L10 17.600l1.600-2.300z" fill="#6f45d8"/><rect x="8.500" y="12" width="3" height="3.800" rx="1" fill="#eaa994"/><ellipse cx="6.300" cy="9" rx=".8" ry="1.200" fill="#eeb19c"/><ellipse cx="13.700" cy="9" rx=".8" ry="1.200" fill="#eeb19c"/><ellipse cx="10" cy="8.600" rx="3.500" ry="4.900" fill="#f5c4b1"/><path d="M6.400 7.600C6 4.400 7.600 2.800 10 2.800s4 1.600 3.600 4.800C12.800 5.800 11.600 5.200 10 5.200S7.200 5.800 6.400 7.600z" fill="#3b2b30"/><circle cx="8.500" cy="8.600" r=".45" fill="#4a3a3a"/><circle cx="11.500" cy="8.600" r=".45" fill="#4a3a3a"/></g></svg>
<div class="chip" style="left:284px;top:634px;width:76px">黄一峰</div>
<svg style="left:284px;top:634px" width="20" height="20" viewBox="0 0 20 20"><defs><clipPath id="c284_634"><circle cx="10" cy="10" r="10"/></clipPath></defs><g clip-path="url(#c284_634)"><circle cx="10" cy="10" r="10" fill="#e6433b"/><path d="M3.500 20c0-3.200 2.600-4.600 6.500-4.600s6.500 1.400 6.500 4.600z" fill="#3566cf"/><path d="M7.800 15.500L10 17.800l2.200-2.300c-1.200-.4-3.200-.4-4.400 0z" fill="#f1e6f0"/><rect x="8.500" y="12" width="3" height="3.700" rx="1" fill="#eaa08a"/><ellipse cx="10" cy="9.200" rx="3.400" ry="4.500" fill="#f4b09a"/><path d="M6.200 8.800C5.400 4.600 7.400 2.400 10 2.400s4.800 2 3.800 6.400c-.3-1.600-1-2.400-1.600-2.800-1.200.8-3.800 1-4.800.6-.6.500-1 1.200-1.200 2.200z" fill="#2a2038"/><circle cx="8.600" cy="9.200" r=".45" fill="#3a2a3a"/><circle cx="11.400" cy="9.200" r=".45" fill="#3a2a3a"/></g></svg>
<div class="cell" style="left:391px;top:634px">孙三官</div>
<div class="cell" style="left:494px;top:634px;letter-spacing:.85px">138****8402</div>
<div class="gap" style="top:662px;height:8px"></div>
<div class="hl" style="left:13px;top:701px;width:612px"></div>
<svg style="left:68px;top:682px" width="12" height="8" viewBox="0 0 12 8"><path d="M1.200 1.500L6 6.300l4.800-4.800" stroke="#222" stroke-width="1.500" fill="none"/></svg>
<div class="cb" style="left:87px;top:678px"></div>
<div class="tag" style="left:116px;top:676px;background:#4eb03c;font-weight:700;letter-spacing:-1px;padding:0 0 0 8px;width:33px">AE</div>
<div class="vl" style="left:275px;top:670px;height:31px;background:#d2d2d2"></div>
<div class="vl" style="left:382px;top:670px;height:31px;background:#ebebeb"></div>
<div class="vl" style="left:484px;top:670px;height:31px;background:#ebebeb"></div>
<div class="hl" style="left:13px;top:736px;width:612px"></div>
<div class="num" style="top:709px">1</div>
<div class="vl" style="left:151px;top:702px;height:34px;background:#ebebeb"></div>
<div class="vl" style="left:275px;top:702px;height:34px;background:#d2d2d2"></div>
<div class="vl" style="left:382px;top:702px;height:34px;background:#ebebeb"></div>
<div class="vl" style="left:484px;top:702px;height:34px;background:#ebebeb"></div>
<div class="abs" style="left:485px;top:702px;width:140px;height:34px;background:#f0ecfd;border:1px solid #4d3bb5"></div>
<div class="chip" style="left:160px;top:709px;width:76px">郑光芝</div>
<svg style="left:160px;top:709px" width="20" height="20" viewBox="0 0 20 20"><defs><clipPath id="c160_709"><circle cx="10" cy="10" r="10"/></clipPath></defs><g clip-path="url(#c160_709)"><circle cx="10" cy="10" r="10" fill="#ededf1"/><path d="M3.500 20c0-3.200 2.600-4.600 6.500-4.600s6.500 1.400 6.500 4.600z" fill="#8b5ff0"/><path d="M8.400 15.300L10 17.600l1.600-2.300z" fill="#6f45d8"/><rect x="8.500" y="12" width="3" height="3.800" rx="1" fill="#eaa994"/><ellipse cx="6.300" cy="9" rx=".8" ry="1.200" fill="#eeb19c"/><ellipse cx="13.700" cy="9" rx=".8" ry="1.200" fill="#eeb19c"/><ellipse cx="10" cy="8.600" rx="3.500" ry="4.900" fill="#f5c4b1"/><path d="M6.400 7.600C6 4.400 7.600 2.800 10 2.800s4 1.600 3.600 4.800C12.800 5.800 11.600 5.200 10 5.200S7.200 5.800 6.400 7.600z" fill="#3b2b30"/><circle cx="8.500" cy="8.600" r=".45" fill="#4a3a3a"/><circle cx="11.500" cy="8.600" r=".45" fill="#4a3a3a"/></g></svg>
<div class="chip" style="left:284px;top:709px;width:76px">黄一峰</div>
<svg style="left:284px;top:709px" width="20" height="20" viewBox="0 0 20 20"><defs><clipPath id="c284_709"><circle cx="10" cy="10" r="10"/></clipPath></defs><g clip-path="url(#c284_709)"><circle cx="10" cy="10" r="10" fill="#e6433b"/><path d="M3.500 20c0-3.200 2.600-4.600 6.500-4.600s6.500 1.400 6.500 4.600z" fill="#3566cf"/><path d="M7.800 15.500L10 17.800l2.200-2.300c-1.200-.4-3.200-.4-4.400 0z" fill="#f1e6f0"/><rect x="8.500" y="12" width="3" height="3.700" rx="1" fill="#eaa08a"/><ellipse cx="10" cy="9.200" rx="3.400" ry="4.500" fill="#f4b09a"/><path d="M6.200 8.800C5.400 4.600 7.400 2.400 10 2.400s4.800 2 3.800 6.400c-.3-1.600-1-2.400-1.600-2.800-1.200.8-3.800 1-4.800.6-.6.500-1 1.200-1.200 2.200z" fill="#2a2038"/><circle cx="8.600" cy="9.200" r=".45" fill="#3a2a3a"/><circle cx="11.400" cy="9.200" r=".45" fill="#3a2a3a"/></g></svg>
<div class="cell" style="left:391px;top:709px">孙金明</div>
<div class="cell" style="left:494px;top:709px;letter-spacing:.85px">138****8403</div>
<div class="vl" style="left:151px;top:159px;height:37px;background:#ebebeb"></div>
<div class="vl" style="left:275px;top:159px;height:37px;background:#d2d2d2"></div>
<div class="vl" style="left:382px;top:159px;height:37px;background:#ebebeb"></div>
<div class="vl" style="left:484px;top:159px;height:37px;background:#ebebeb"></div>
<div class="hl" style="left:13px;top:737px;width:1411px;height:1px;background:#e2e2e2"></div>
<div class="vl" style="left:151px;top:738px;height:39px;background:#ebebeb"></div>
<div class="vl" style="left:275px;top:738px;height:39px;background:#d2d2d2"></div>
<div class="vl" style="left:382px;top:738px;height:39px;background:#ebebeb"></div>
<div class="vl" style="left:484px;top:738px;height:39px;background:#ebebeb"></div>
<div class="t" style="left:89px;top:748px;font-size:12px;color:#8c8c8c">10条</div>
<div class="abs" style="left:1419px;top:223px;width:8px;height:282px;border-radius:3px;background:#8c8c8c"></div>
<div class="t" style="left:1124px;top:707px;height:46px;line-height:46px;font-size:40px;font-weight:500;color:#fff;letter-spacing:1.900px;text-shadow:1px 1px 0 #a6a6a6,2px 2px 0 #a6a6a6,2.500px 2.500px 1px rgba(150,150,150,.6)">知乎 @伙伴云</div>
</body></html>
